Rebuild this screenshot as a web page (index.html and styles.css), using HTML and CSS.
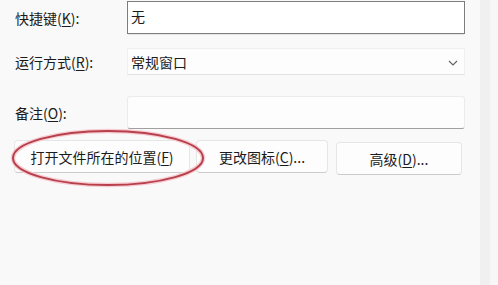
FILE: index.html
```html
<!DOCTYPE html>
<html lang="zh">
<head>
<meta charset="utf-8">
<link rel="stylesheet" href="styles.css">
</head>
<body>
<div class="page">
  <div class="dialog">
    <div class="row row-key">
      <label class="label">快捷键(<u>K</u>):</label>
      <div class="field field-focus">无</div>
    </div>
    <div class="row row-run">
      <label class="label">运行方式(<u>R</u>):</label>
      <div class="field select">
        <span>常规窗口</span>
        <svg class="chev" width="10" height="6" viewBox="0 0 10 6"><path d="M1 1 L5 5 L9 1" fill="none" stroke="#606060" stroke-width="1.1"/></svg>
      </div>
    </div>
    <div class="row row-note">
      <label class="label">备注(<u>O</u>):</label>
      <div class="field field-note"></div>
    </div>
    <div class="buttons">
      <button class="btn btn-open">打开文件所在的位置(<u>F</u>)</button>
      <button class="btn btn-icon">更改图标(<u>C</u>)...</button>
      <button class="btn btn-adv">高级(<u>D</u>)...</button>
      <svg class="mark" width="198" height="60" viewBox="0 0 198 60"><ellipse cx="99" cy="30" rx="95" ry="27" fill="none" stroke="#f6cdd2" stroke-width="4.5"/><ellipse cx="99" cy="30" rx="95" ry="27" fill="none" stroke="#b8404c" stroke-width="2"/></svg>
    </div>
  </div>
  <div class="strip"></div>
  <div class="edge"></div>
</div>
</body>
</html>
```
FILE: styles.css
```css
html, body {
  margin: 0;
  padding: 0;
  background: #f9f9f9;
}
body {
  font-family: "Noto Sans CJK SC", "Noto Sans", sans-serif;
  font-size: 14px;
  color: #1b1b1b;
}
.page {
  display: flex;
  width: 498px;
  height: 285px;
  overflow: hidden;
}
.dialog {
  width: 480px;
  display: flex;
  flex-direction: column;
  padding-left: 14px;
  box-sizing: border-box;
}
.strip {
  width: 10px;
  background: #f0f0f0;
}
.edge {
  flex: 1;
  background: #f7f7f7;
}
.row {
  display: flex;
  align-items: center;
}
.label {
  width: 112px;
  line-height: 20px;
  padding-left: 1px;
}
u {
  text-decoration-thickness: 1px;
  text-underline-offset: 2px;
}
.field {
  width: 338px;
  box-sizing: border-box;
  background: #fdfdfd;
  display: flex;
  align-items: center;
  padding-left: 3px;
  line-height: 20px;
}
.row-key {
  margin-top: 1px;
}
.field-focus {
  height: 33px;
  border: 1px solid #7d7d7d;
  background: #ffffff;
  box-shadow: 0 2px 0 -1px #e6e6e6;
  align-items: flex-start;
  padding-top: 4px;
}
.row-run {
  margin-top: 14px;
}
.select {
  height: 27px;
  border: 1px solid #efefef;
  border-bottom-color: #e2e2e2;
  justify-content: space-between;
  padding-right: 6px;
}
.chev {
  margin-top: 2px;
}
.row-note {
  margin-top: 21px;
}
.field-note {
  height: 33px;
  border: 1px solid #ececec;
  border-bottom: 1px solid #a0a0a0;
  border-radius: 3px;
}
.buttons {
  position: relative;
  display: flex;
  margin-top: 11px;
  align-items: flex-start;
}
.btn {
  font: inherit;
  color: #1b1b1b;
  background: #fdfdfd;
  border: 1px solid #e6e6e6;
  border-bottom-color: #cccccc;
  border-radius: 4px;
  height: 33px;
  padding: 0;
  line-height: 20px;
}
.btn-open {
  width: 176px;
}
.btn-icon {
  width: 132px;
  margin-left: 6px;
}
.btn-adv {
  width: 126px;
  margin-left: 8px;
  margin-top: 2px;
}
.mark {
  position: absolute;
  left: -5px;
  top: -12px;
}
```
